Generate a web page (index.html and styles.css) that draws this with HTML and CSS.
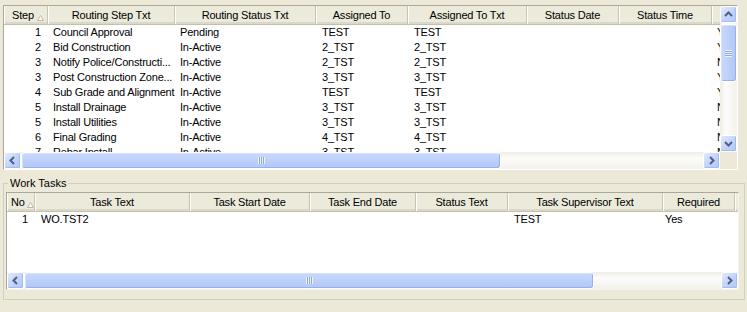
FILE: index.html
```html
<!DOCTYPE html>
<html lang="en">
<head>
    <meta charset="UTF-8">
    <title>Work Order Routing</title>
    <link rel="stylesheet" href="styles.css">
</head>
<body>
    <div class="grid grid-top">
        <div class="view">
            <table class="list list-top">
                <colgroup>
                    <col class="w-step"><col class="w-rstep"><col class="w-rstat"><col class="w-asg">
                    <col class="w-asgt"><col class="w-sdate"><col class="w-stime"><col class="w-more">
                </colgroup>
                <thead>
                    <tr>
                        <th class="sorted"><span>Step</span><svg width="7" height="6" viewBox="0 0 7 6"><path d="M0.5 5.5 L3.5 0.5 L6.5 5.5 Z" fill="#fff" stroke="#bdb9a8"/></svg></th>
                        <th>Routing Step Txt</th>
                        <th>Routing Status Txt</th>
                        <th>Assigned To</th>
                        <th>Assigned To Txt</th>
                        <th>Status Date</th>
                        <th>Status Time</th>
                        <th>Required</th>
                    </tr>
                </thead>
                <tbody>
                    <tr><td class="num">1</td><td>Council Approval</td><td>Pending</td><td class="pad">TEST</td><td class="pad">TEST</td><td></td><td></td><td>Yes</td></tr>
                    <tr><td class="num">2</td><td>Bid Construction</td><td>In-Active</td><td class="pad">2_TST</td><td class="pad">2_TST</td><td></td><td></td><td>Yes</td></tr>
                    <tr><td class="num">3</td><td>Notify Police/Constructi...</td><td>In-Active</td><td class="pad">2_TST</td><td class="pad">2_TST</td><td></td><td></td><td>No</td></tr>
                    <tr><td class="num">3</td><td>Post Construction Zone...</td><td>In-Active</td><td class="pad">3_TST</td><td class="pad">3_TST</td><td></td><td></td><td>Yes</td></tr>
                    <tr><td class="num">4</td><td>Sub Grade and Alignment</td><td>In-Active</td><td class="pad">TEST</td><td class="pad">TEST</td><td></td><td></td><td>Yes</td></tr>
                    <tr><td class="num">5</td><td>Install Drainage</td><td>In-Active</td><td class="pad">3_TST</td><td class="pad">3_TST</td><td></td><td></td><td>No</td></tr>
                    <tr><td class="num">5</td><td>Install Utilities</td><td>In-Active</td><td class="pad">3_TST</td><td class="pad">3_TST</td><td></td><td></td><td>No</td></tr>
                    <tr><td class="num">6</td><td>Final Grading</td><td>In-Active</td><td class="pad">4_TST</td><td class="pad">4_TST</td><td></td><td></td><td>No</td></tr>
                    <tr><td class="num">7</td><td>Rebar Install</td><td>In-Active</td><td class="pad">3_TST</td><td class="pad">3_TST</td><td></td><td></td><td>No</td></tr>
                </tbody>
            </table>
        </div>
        <div class="vscroll">
            <div class="sbtn"><svg width="9" height="9" viewBox="0 0 9 9"><path d="M1 6 L4.5 2.5 L8 6" stroke="#4d6185" stroke-width="2" fill="none"/></svg></div>
            <div class="thumb thumb-v"><span class="grip-v"></span></div>
            <div class="track"></div>
            <div class="sbtn"><svg width="9" height="9" viewBox="0 0 9 9"><path d="M1 3 L4.5 6.5 L8 3" stroke="#4d6185" stroke-width="2" fill="none"/></svg></div>
        </div>
        <div class="hscroll">
            <div class="sbtn"><svg width="9" height="9" viewBox="0 0 9 9"><path d="M6 1 L2.5 4.5 L6 8" stroke="#4d6185" stroke-width="2" fill="none"/></svg></div>
            <div class="thumb thumb-top"><span class="grip-h"></span></div>
            <div class="track"></div>
            <div class="sbtn"><svg width="9" height="9" viewBox="0 0 9 9"><path d="M3 1 L6.5 4.5 L3 8" stroke="#4d6185" stroke-width="2" fill="none"/></svg></div>
        </div>
        <div class="corner"></div>
    </div>

    <fieldset class="group">
        <legend>Work Tasks</legend>
        <div class="grid grid-bottom">
            <div class="view">
                <table class="list list-bottom">
                    <colgroup>
                        <col class="w-no"><col class="w-task"><col class="w-start"><col class="w-end">
                        <col class="w-stat"><col class="w-sup"><col class="w-req"><col class="w-rest">
                    </colgroup>
                    <thead>
                        <tr>
                            <th class="sorted sorted-no"><span>No</span><svg width="7" height="6" viewBox="0 0 7 6"><path d="M0.5 5.5 L3.5 0.5 L6.5 5.5 Z" fill="#fff" stroke="#bdb9a8"/></svg></th>
                            <th>Task Text</th>
                            <th>Task Start Date</th>
                            <th>Task End Date</th>
                            <th>Status Text</th>
                            <th>Task Supervisor Text</th>
                            <th>Required</th>
                            <th>Comments</th>
                        </tr>
                    </thead>
                    <tbody>
                        <tr><td class="num">1</td><td class="pad">WO.TST2</td><td></td><td></td><td></td><td class="pad">TEST</td><td class="tight">Yes</td><td></td></tr>
                    </tbody>
                </table>
            </div>
            <div class="hscroll">
                <div class="sbtn"><svg width="9" height="9" viewBox="0 0 9 9"><path d="M6 1 L2.5 4.5 L6 8" stroke="#4d6185" stroke-width="2" fill="none"/></svg></div>
                <div class="thumb thumb-bottom"><span class="grip-h"></span></div>
                <div class="track"></div>
                <div class="sbtn"><svg width="9" height="9" viewBox="0 0 9 9"><path d="M3 1 L6.5 4.5 L3 8" stroke="#4d6185" stroke-width="2" fill="none"/></svg></div>
            </div>
        </div>
    </fieldset>
</body>
</html>
```

FILE: styles.css
```css
body {
    margin: 0;
    background: #ece9d8;
    font-family: "Liberation Sans", Arial, sans-serif;
    font-size: 11px;
    color: #000;
}

/* list view frame */
.grid {
    display: grid;
    background: #fff;
    border: 1px solid;
    border-color: #aca899 #fff #fff #aca899;
}
.grid-top {
    margin: 5px 0 0 3px;
    width: 733px;
    grid-template-columns: 716px 17px;
    grid-template-rows: 146px 17px;
}
.grid-bottom {
    width: 731px;
    grid-template-columns: 731px;
    grid-template-rows: 79px 17px;
    border-color: #aca899 #f4f3ee #f4f3ee #aca899;
}
.view {
    overflow: hidden;
    background: #fff;
}

.list {
    border-collapse: separate;
    border-spacing: 0;
    table-layout: fixed;
    white-space: nowrap;
    letter-spacing: -0.2px;
}
.list-top { width: 800px; }
.list-bottom { width: 900px; }

.list th {
    height: 18px;
    padding: 0 4px;
    font-weight: normal;
    text-align: center;
    background: #ebeadb;
    border-right: 1px solid #c7c5b2;
    border-bottom: 1px solid #c4c0ae;
    box-shadow: inset 1px 0 #fff, inset 0 -2px #dcd8c7;
    overflow: hidden;
}
.list th.sorted {
    text-align: left;
    padding: 0 3px 0 8px;
}
.list th.sorted svg {
    float: right;
    margin-top: 6px;
}
.list th.sorted-no {
    padding: 0 0 0 4px;
}
.list td {
    height: 15px;
    line-height: 15px;
    padding: 0 5px;
    overflow: hidden;
}
.list td.num {
    text-align: right;
    padding: 0 7px 0 0;
}
.list td.pad { padding-left: 6px; }
.list td.tight { padding-left: 2px; }

.w-step { width: 44px; }
.w-rstep { width: 127px; }
.w-rstat { width: 141px; }
.w-asg { width: 92px; }
.w-asgt { width: 119px; }
.w-sdate { width: 92px; }
.w-stime { width: 93px; }
.w-more { width: 92px; }

.w-no { width: 28px; }
.w-task { width: 155px; }
.w-start { width: 120px; }
.w-end { width: 106px; }
.w-stat { width: 92px; }
.w-sup { width: 155px; }
.w-req { width: 72px; }
.w-rest { width: 172px; }

/* scroll bars */
.hscroll, .vscroll {
    display: flex;
}
.vscroll {
    flex-direction: column;
    background: linear-gradient(to right, #eeede5, #fcfcfa 35%, #f3f1ea);
}
.hscroll {
    background: linear-gradient(#eeede5, #fcfcfa 35%, #f3f1ea);
}
.sbtn {
    width: 15px;
    height: 15px;
    flex: none;
    display: flex;
    align-items: center;
    justify-content: center;
    border: 1px solid #fff;
    border-radius: 2px;
    background: linear-gradient(135deg, #e1eafe, #bfd1fa 60%, #b4c8f6);
    box-shadow: inset -1px -1px #a3bbef;
}
.track {
    flex: 1;
}
.thumb {
    flex: none;
    display: flex;
    align-items: center;
    justify-content: center;
    border: 1px solid #fff;
    border-radius: 3px;
    box-shadow: inset -1px -1px #97b1ec, inset 1px 1px #d6e2fd;
}
.thumb-v {
    height: 56px;
    margin-top: 1px;
    background: linear-gradient(to right, #c9d9fd, #bdd0fb 50%, #b3c7f6);
}
.thumb-top {
    width: 478px;
    background: linear-gradient(#c9d9fd, #bdd0fb 50%, #b3c7f6);
}
.thumb-bottom {
    width: 568px;
    background: linear-gradient(#c9d9fd, #bdd0fb 50%, #b3c7f6);
}
.grip-h {
    width: 7px;
    height: 7px;
    background: repeating-linear-gradient(to right, #eef3fe 0 1px, #8ca6e0 1px 2px);
}
.grip-v {
    width: 7px;
    height: 7px;
    background: repeating-linear-gradient(#eef3fe 0 1px, #8ca6e0 1px 2px);
}
.corner {
    background: #ece9d8;
}

/* group box */
.group {
    margin: 6px 2px 0 3px;
    padding: 2px 5px 9px 2px;
    border: 1px solid #d0d0bf;
}
.group legend {
    padding: 0 2px;
    margin-left: 2px;
    line-height: 14px;
}
```
